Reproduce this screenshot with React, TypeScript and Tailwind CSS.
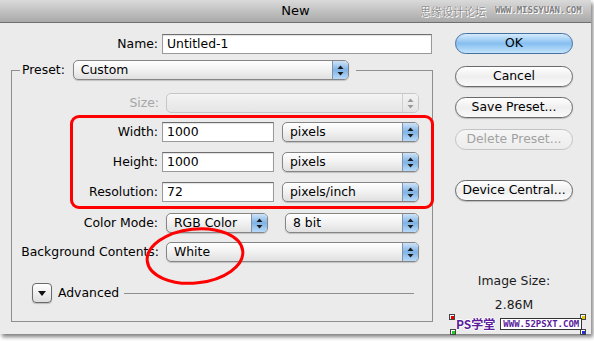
import React from "react";

const Arrows = ({ disabled }: { disabled?: boolean }) => (
  <svg width="7" height="11" viewBox="0 0 7 11">
    <path d="M3.5 0.5 L6.5 4 L0.5 4 Z" fill={disabled ? "#9a9a9a" : "#1a1a1a"} />
    <path d="M3.5 10.5 L6.5 7 L0.5 7 Z" fill={disabled ? "#9a9a9a" : "#1a1a1a"} />
  </svg>
);

const Select = ({ text, className, disabled }: { text?: string; className?: string; disabled?: boolean }) => (
  <div
    className={`h-[20px] rounded-[5px] border flex items-stretch overflow-hidden ${
      disabled
        ? "border-[#c6c6c6] bg-gradient-to-b from-[#f4f4f4] via-[#ececec] to-[#e6e6e6]"
        : "border-[#858585] bg-gradient-to-b from-white via-[#f1f1f1] to-[#e0e0e0] shadow-[0_1px_1px_rgba(0,0,0,0.18)]"
    } ${className ?? ""}`}
  >
    <span className="flex-1 pl-[7px] leading-[18px] text-black">{text}</span>
    <div
      className={`w-[16px] flex items-center justify-center border-l ${
        disabled
          ? "border-[#d0d0d0] bg-gradient-to-b from-[#f2f2f2] to-[#e4e4e4]"
          : "border-[#7d93ad] bg-gradient-to-b from-[#cfe3f7] via-[#7fb3e6] to-[#b8daf7]"
      }`}
    >
      <Arrows disabled={disabled} />
    </div>
  </div>
);

const Input = ({ value, className }: { value: string; className?: string }) => (
  <div
    className={`h-[20px] border border-[#9a9a9a] border-t-[#6e6e6e] bg-white pl-[4px] leading-[18px] text-black shadow-[inset_0_1px_1px_rgba(0,0,0,0.12)] ${className ?? ""}`}
  >
    {value}
  </div>
);

const AquaButton = ({
  label,
  variant,
  className,
}: {
  label: string;
  variant?: "default" | "primary" | "disabled";
  className?: string;
}) => {
  const styles =
    variant === "primary"
      ? "border-[#46709f] bg-gradient-to-b from-[#d6ebfc] via-[#86bff0] to-[#c4e3fc] text-black"
      : variant === "disabled"
      ? "border-[#c3c3c3] bg-gradient-to-b from-[#f6f6f6] to-[#ececec] text-[#a2a2a2]"
      : "border-[#6a6a6a] bg-gradient-to-b from-white via-[#efefef] to-[#fafafa] text-black shadow-[0_1px_1px_rgba(0,0,0,0.2)]";
  return (
    <div
      className={`h-[21px] w-[118px] rounded-full border flex items-center justify-center ${styles} ${className ?? ""}`}
    >
      {label}
    </div>
  );
};

const Corner = ({ color, className }: { color: string; className: string }) => (
  <span className={`absolute w-[6px] h-[6px] border border-[#444] bg-white ${className}`}>
    <span className="absolute left-[1px] top-[1px] w-[3px] h-[3px]" style={{ background: color }} />
  </span>
);

export default function App() {
  return (
    <div className="w-[594px] h-[341px] bg-white overflow-hidden font-['DejaVu_Sans',sans-serif] text-[12.4px] text-black">
      <div className="relative w-[591px] h-[334px] bg-[#ebebeb] shadow-[2px_3px_4px_rgba(0,0,0,0.5)] flex flex-col">
        {/* Title bar */}
        <div className="relative h-[23px] shrink-0 border-b border-[#6f6f6f] bg-gradient-to-b from-[#dadada] to-[#a9a9a9] flex items-center justify-center">
          <span className="text-[13px] text-black">New</span>
          <div className="absolute left-[420px] top-[4px] flex items-center gap-[9px] whitespace-nowrap">
            <span className="font-['Noto_Sans_CJK_SC',sans-serif] text-[11px] leading-[14px] text-[#8d8d8d] [text-shadow:0_0_1px_#fff,1px_1px_0_#fff]">
              思缘设计论坛
            </span>
            <span className="font-['DejaVu_Sans_Mono',monospace] text-[9px] font-bold text-[#7d7d7d] [text-shadow:0_0_1px_#fff,1px_1px_0_#fff]">
              WWW.MISSYUAN.COM
            </span>
          </div>
        </div>

        {/* Body */}
        <div className="flex flex-1">
          {/* Left column */}
          <div className="w-[440px] flex flex-col">
            <div className="mt-[11px] flex items-center h-[20px]">
              <span className="w-[158px] text-right">Name:</span>
              <Input value="Untitled-1" className="ml-[4px] w-[270px]" />
            </div>

            <div className="ml-[11px] mt-[6px] w-[422px] flex flex-col">
              <div className="flex items-center h-[20px]">
                <span className="w-[9px] h-px bg-[#8e8e8e]" />
                <span className="ml-[2px]">Preset:</span>
                <Select text="Custom" className="ml-[8px] w-[276px]" />
                <span className="ml-[7px] flex-1 h-px bg-[#8e8e8e]" />
              </div>
              <div className="-mt-[10px] border-x border-b border-[#8e8e8e] pt-[23px] pb-[18px] flex flex-col">
                <div className="flex items-center h-[20px]">
                  <span className="w-[147px] text-right text-[#a6a6a6]">Size:</span>
                  <Select disabled className="ml-[7px] w-[253px]" />
                </div>

                <div className="mt-[2px] ml-[58px] w-[364px] border-[3px] border-[#f00] rounded-[9px] py-[4px] flex flex-col gap-[10px]">
                  {[
                    ["Width:", "1000", "pixels"],
                    ["Height:", "1000", "pixels"],
                    ["Resolution:", "72", "pixels/inch"],
                  ].map(([l, v, u]) => (
                    <div key={l} className="flex items-center h-[20px]">
                      <span className="w-[85px] text-right">{l}</span>
                      <Input value={v} className="ml-[4px] w-[112px]" />
                      <Select text={u} className="ml-[8px] w-[137px]" />
                    </div>
                  ))}
                </div>

                <div className="mt-[4px] flex items-center h-[20px]">
                  <span className="w-[146px] text-right">Color Mode:</span>
                  <Select text="RGB Color" className="ml-[8px] w-[102px]" />
                  <Select text="8 bit" className="ml-[17px] w-[134px]" />
                </div>

                <div className="mt-[9px] flex items-center h-[20px]">
                  <span className="w-[147px] text-right whitespace-nowrap">Background Contents:</span>
                  <Select text="White" className="ml-[7px] w-[253px]" />
                </div>

                <div className="mt-[21px] flex items-center h-[20px]">
                  <div className="ml-[20px] w-[20px] h-[20px] rounded-[4px] border border-[#6a6a6a] bg-gradient-to-b from-white to-[#dedede] flex items-center justify-center shadow-[0_1px_1px_rgba(0,0,0,0.2)]">
                    <svg width="8" height="5" viewBox="0 0 8 5">
                      <path d="M0 0 L8 0 L4 5 Z" fill="#111" />
                    </svg>
                  </div>
                  <span className="ml-[6px]">Advanced</span>
                  <span className="ml-[5px] w-[290px] h-px bg-[#8e8e8e]" />
                </div>
              </div>
            </div>
          </div>

          {/* Right column */}
          <div className="ml-[15px] flex flex-col items-center w-[118px]">
            <AquaButton label="OK" variant="primary" className="mt-[10px]" />
            <AquaButton label="Cancel" className="mt-[12px]" />
            <AquaButton label="Save Preset..." className="mt-[10px]" />
            <AquaButton label="Delete Preset..." variant="disabled" className="mt-[11px]" />
            <AquaButton label="Device Central..." className="mt-[30px]" />
            <span className="mt-[73px] leading-[14px] text-[#1c1c1c]">Image Size:</span>
            <span className="mt-[10px] leading-[14px] text-[#1c1c1c]">2.86M</span>
          </div>
        </div>

        {/* Annotation ellipse */}
        <svg className="absolute left-[140px] top-[222px]" width="112" height="68" viewBox="0 0 112 68">
          <ellipse cx="55" cy="34" rx="48" ry="27" fill="none" stroke="#f00" strokeWidth="3" transform="rotate(-6 55 34)" />
        </svg>

        {/* Bottom watermark */}
        <div className="absolute left-[449px] top-[314px] w-[137px] h-[21px]">
          <Corner color="#e00" className="left-0 top-0" />
          <Corner color="#e6c800" className="right-0 top-0" />
          <Corner color="#2c2" className="left-[1px] bottom-0" />
          <Corner color="#23d" className="right-0 bottom-0" />
          <div className="absolute left-[7px] top-[2px] flex items-center gap-[5px] whitespace-nowrap">
            <span className="font-['Noto_Sans_CJK_SC',sans-serif] text-[12px] leading-[16px] font-bold text-[#5a1c9a] [text-shadow:1px_0_0_#fff,-1px_0_0_#fff,0_1px_0_#fff,0_-1px_0_#fff]">
              PS学堂
            </span>
            <span className="bg-white border border-[#333] px-[2px] font-['DejaVu_Sans_Mono',monospace] text-[9px] leading-[10px] font-bold text-[#5a1c9a]">
              WWW.52PSXT.COM
            </span>
          </div>
        </div>
      </div>
    </div>
  );
}
